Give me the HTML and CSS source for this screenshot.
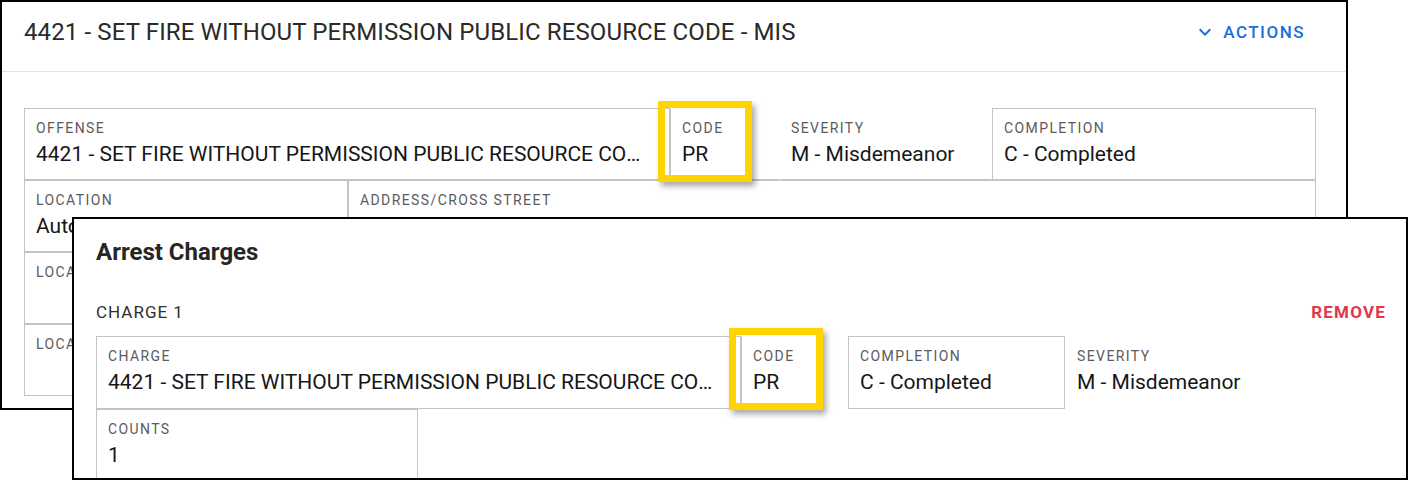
FILE: index.html
```html
<!DOCTYPE html>
<html lang="en">
<head>
<meta charset="utf-8">
<title>Arrest Charges</title>
<link rel="stylesheet" href="styles.css">
</head>
<body>
<div class="stage">
  <section class="record">
    <header class="record-head">
      <h1 class="record-title">4421 - SET FIRE WITHOUT PERMISSION PUBLIC RESOURCE CODE - MIS</h1>
      <button class="actions" type="button">
        <svg class="chev" viewBox="0 0 24 24" width="24" height="24" aria-hidden="true"><path d="M16.59 8.59L12 13.17 7.41 8.59 6 10l6 6 6-6z"/></svg>
        <span>ACTIONS</span>
      </button>
    </header>
    <div class="record-body">
      <div class="row">
        <div class="field f-offense"><div class="lbl">OFFENSE</div><div class="val">4421 - SET FIRE WITHOUT PERMISSION PUBLIC RESOURCE CODE - MISDEMEANOR</div></div>
        <div class="field f-code"><div class="lbl">CODE</div><div class="val">PR</div><span class="hl"></span></div>
        <div class="field f-sev"><div class="lbl">SEVERITY</div><div class="val">M - Misdemeanor</div></div>
        <div class="field f-comp"><div class="lbl">COMPLETION</div><div class="val">C - Completed</div></div>
      </div>
      <div class="row">
        <div class="field f-loc"><div class="lbl">LOCATION</div><div class="val">Automobile</div></div>
        <div class="field f-addr"><div class="lbl">ADDRESS/CROSS STREET</div><div class="val"></div></div>
      </div>
      <div class="row">
        <div class="field f-full"><div class="lbl">LOCATION TYPE</div><div class="val"></div></div>
      </div>
      <div class="row">
        <div class="field f-full"><div class="lbl">LOCATION DESCRIPTION</div><div class="val"></div></div>
      </div>
    </div>
  </section>

  <section class="arrest">
    <h2 class="arrest-title">Arrest Charges</h2>
    <div class="charge-head">
      <span class="charge-name">CHARGE 1</span>
      <button class="remove" type="button">REMOVE</button>
    </div>
    <div class="row">
      <div class="field c-charge"><div class="lbl">CHARGE</div><div class="val">4421 - SET FIRE WITHOUT PERMISSION PUBLIC RESOURCE CODE - MISDEMEANOR</div></div>
      <div class="field c-code"><div class="lbl">CODE</div><div class="val">PR</div><span class="hl hl-2"></span></div>
      <div class="field c-comp"><div class="lbl">COMPLETION</div><div class="val">C - Completed</div></div>
      <div class="field c-sev"><div class="lbl">SEVERITY</div><div class="val">M - Misdemeanor</div></div>
    </div>
    <div class="row">
      <div class="field c-counts"><div class="lbl">COUNTS</div><div class="val">1</div></div>
    </div>
  </section>
</div>
</body>
</html>
```

FILE: styles.css
```css
* { box-sizing: border-box; }

html, body {
  margin: 0;
  padding: 0;
  background: #ffffff;
}

body {
  font-family: Roboto, "Liberation Sans", Arial, sans-serif;
  color: #1b1b1b;
  width: 1408px;
  height: 480px;
  overflow: hidden;
}

.stage {
  position: relative;
  width: 1408px;
  height: 480px;
}

/* ---------- background record card ---------- */
.record {
  width: 1348px;
  height: 410px;
  border: 2px solid #000;
  background: #fff;
  overflow: hidden;
}

.record-head {
  display: flex;
  justify-content: space-between;
  align-items: flex-start;
  height: 70px;
  padding: 16px 41px 0 22px;
  border-bottom: 1px solid #e2e2e2;
}

.record-title {
  margin: 0;
  font-size: 24px;
  line-height: 28px;
  font-weight: 400;
  letter-spacing: 0.12px;
  color: #2a2a2a;
  white-space: nowrap;
}

.actions {
  display: flex;
  align-items: center;
  gap: 6px;
  margin: 2px 0 0;
  padding: 0;
  border: 0;
  background: none;
  font-family: inherit;
  font-size: 17px;
  line-height: 24px;
  font-weight: 500;
  letter-spacing: 1.5px;
  color: #1a6fd9;
}

.chev {
  display: block;
  fill: #1a6fd9;
}

.record-body {
  padding: 36px 0 0 22px;
}

.row {
  display: flex;
}

/* ---------- fields ---------- */
.field {
  height: 72px;
  padding: 9px 11px 11px;
  border: 1px solid #c4c4c4;
  min-width: 0;
}

.lbl {
  font-size: 14px;
  line-height: 20px;
  letter-spacing: 1.4px;
  color: #5b5b5b;
  white-space: nowrap;
  overflow: hidden;
}

.val {
  margin-top: 2px;
  font-size: 21px;
  line-height: 28px;
  color: #161616;
  white-space: nowrap;
  overflow: hidden;
  text-overflow: ellipsis;
}

.f-offense .val,
.c-charge .val {
  padding-right: 10px;
}

.f-offense { width: 646px; }
.f-code {
  position: relative;
  width: 109px;
  border-top-color: transparent;
  border-right-color: transparent;
}
.f-sev {
  width: 213px;
  border-top-color: transparent;
  border-left-color: transparent;
  border-right-color: transparent;
}
.f-comp { width: 324px; }
.f-loc { width: 324px; }
.f-addr { width: 968px; }
.f-full { width: 1292px; }

/* yellow call-out frame */
.hl {
  position: absolute;
  top: -8px;
  left: -13px;
  width: 94px;
  height: 81px;
  border: 7px solid #ffd400;
  box-shadow: 3px 4px 6px rgba(0, 0, 0, 0.35);
  pointer-events: none;
}

/* ---------- foreground Arrest Charges panel ---------- */
.arrest {
  position: absolute;
  left: 72px;
  top: 217px;
  width: 1336px;
  height: 263px;
  border: 2px solid #000;
  background: #fff;
  padding: 0 20px 0 22px;
  overflow: hidden;
}

.arrest-title {
  margin: 19px 0 0;
  font-size: 24px;
  line-height: 28px;
  font-weight: 700;
  color: #262626;
}

.charge-head {
  display: flex;
  justify-content: space-between;
  align-items: center;
  margin-top: 34px;
  margin-bottom: 12px;
  height: 24px;
}

.charge-name {
  font-size: 17px;
  line-height: 24px;
  letter-spacing: 1px;
  color: #2e2e2e;
}

.remove {
  padding: 0;
  border: 0;
  background: none;
  font-family: inherit;
  font-size: 17px;
  line-height: 24px;
  font-weight: 700;
  letter-spacing: 1.2px;
  color: #e0374a;
}

.arrest .field { height: 73px; }

.c-charge { width: 645px; }
.c-code {
  position: relative;
  width: 75px;
  border-top-color: transparent;
  border-right-color: transparent;
}
.c-comp {
  width: 217px;
  margin-left: 32px;
}
.c-sev {
  width: 240px;
  border-color: transparent;
}
.c-counts { width: 322px; }

.hl-2 {
  top: -9px;
  left: -13px;
  height: 82px;
}
```
